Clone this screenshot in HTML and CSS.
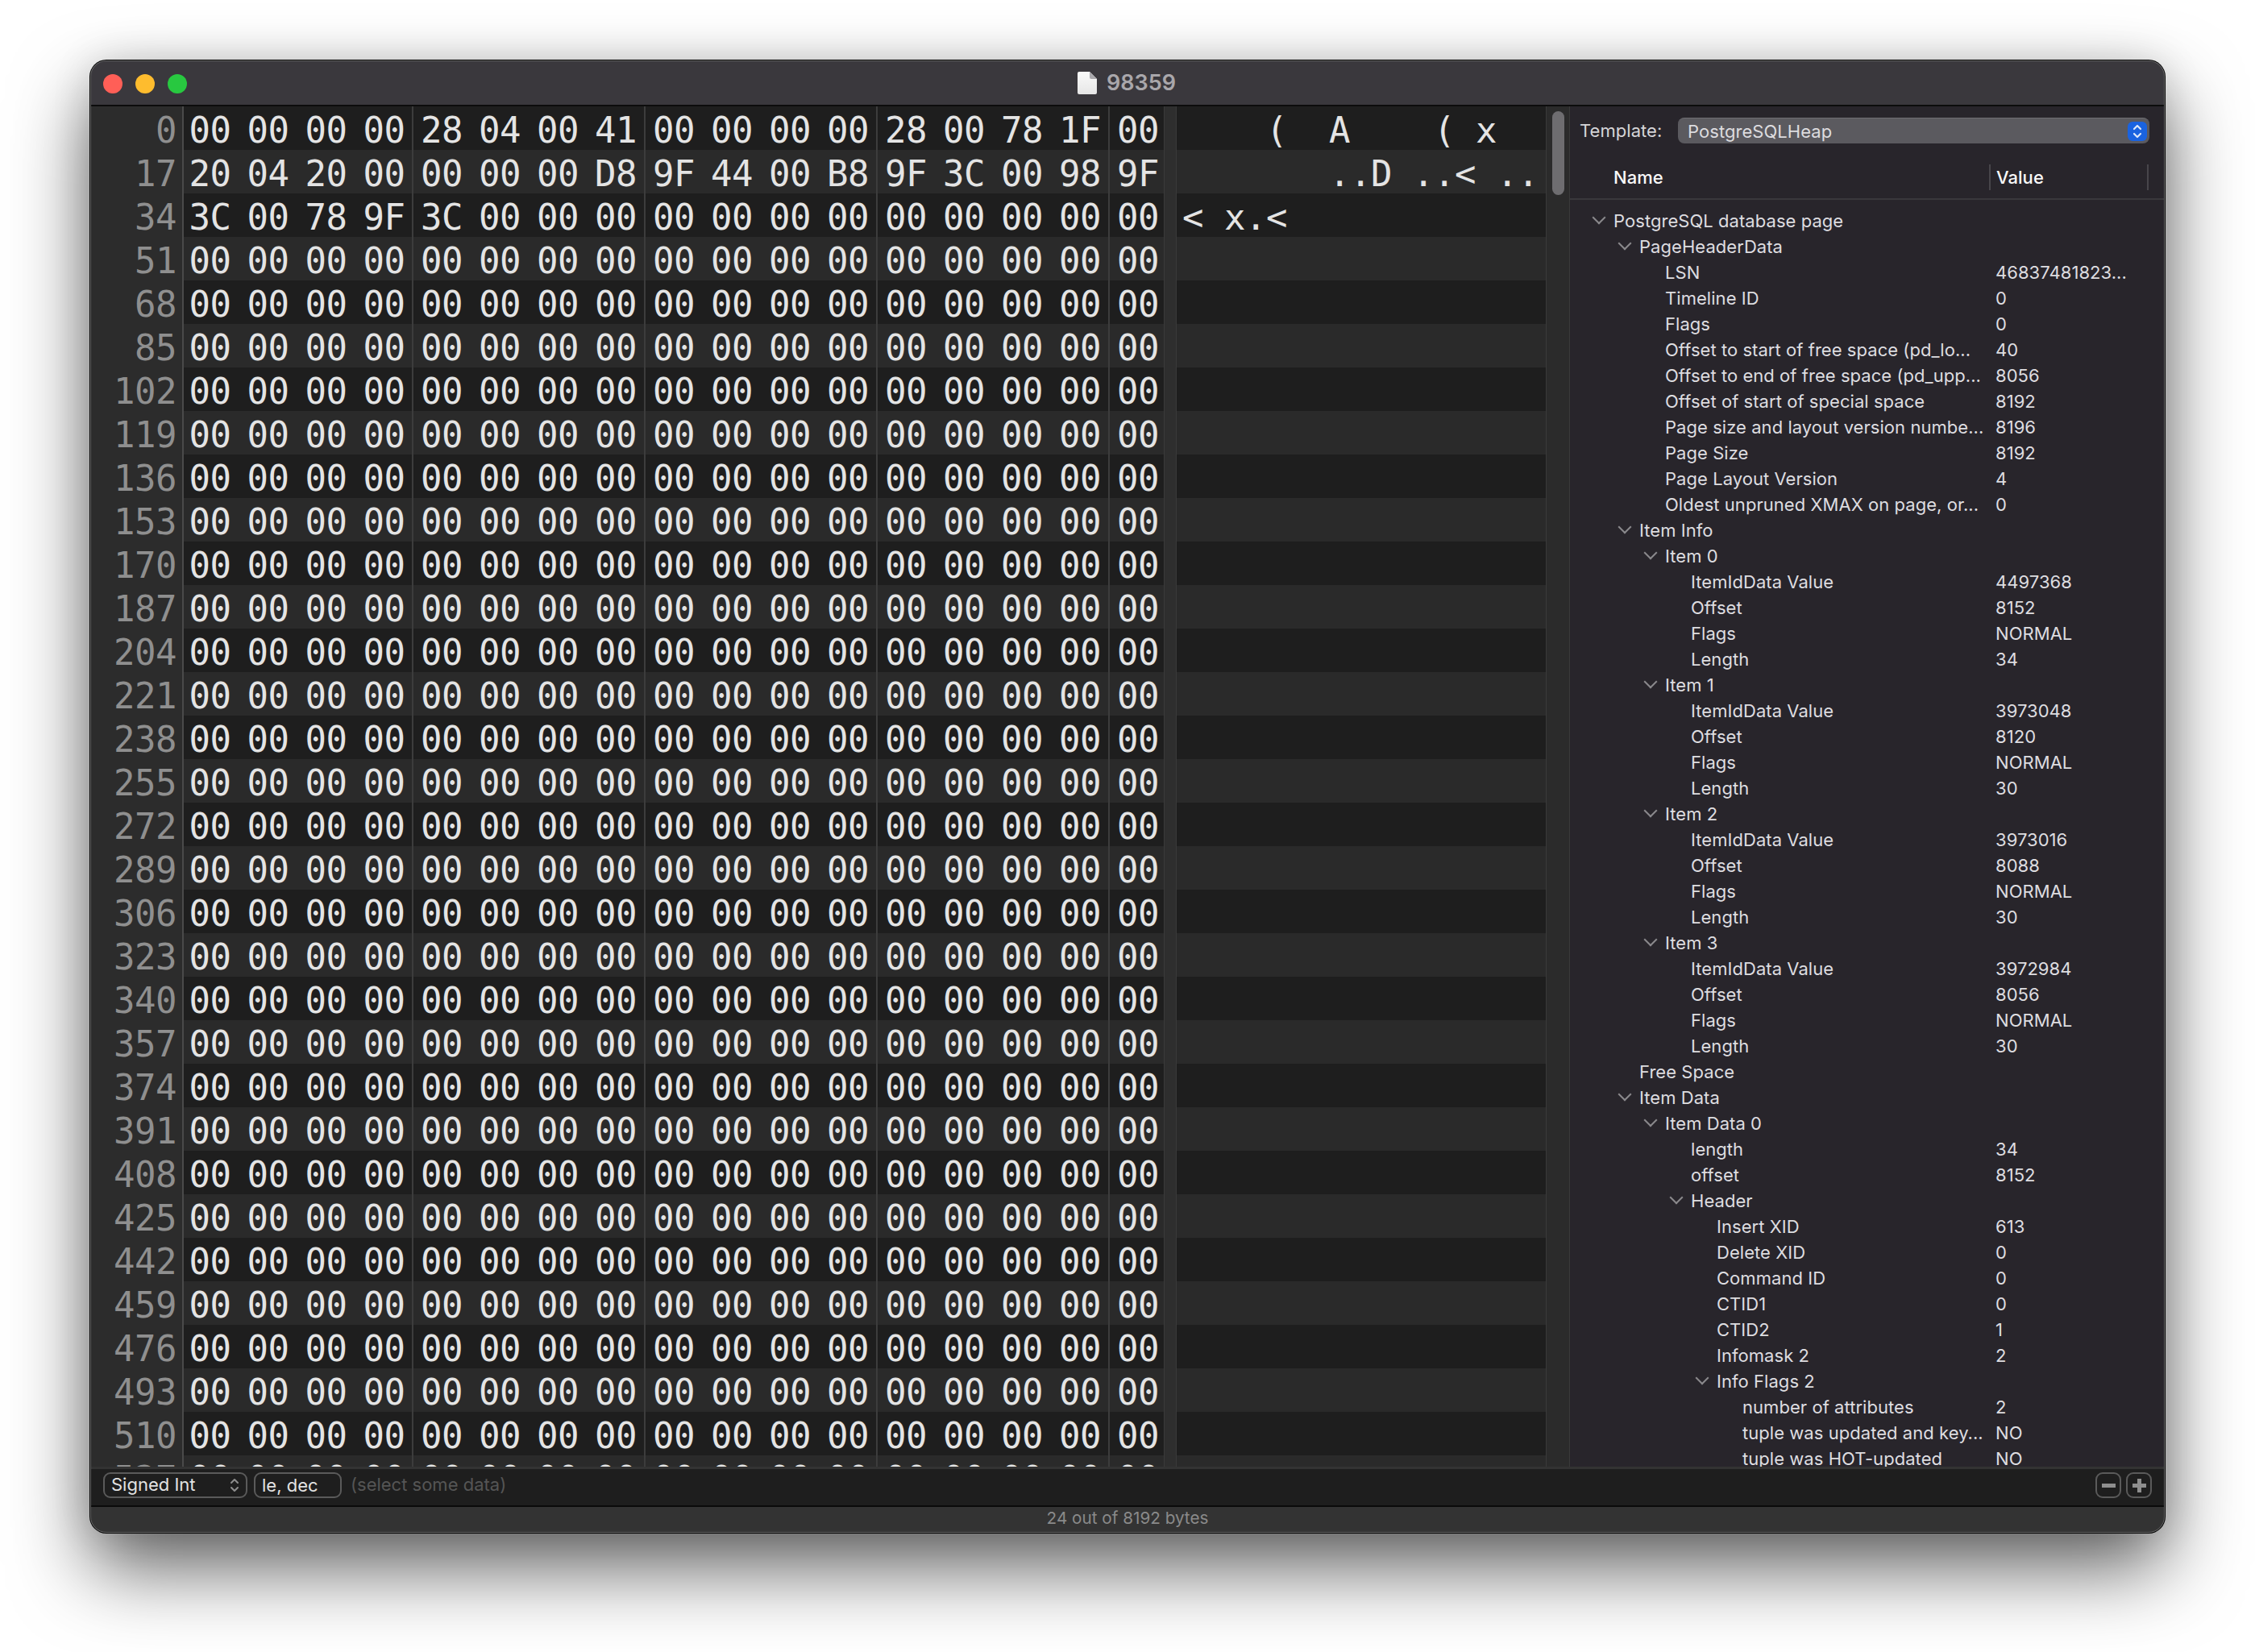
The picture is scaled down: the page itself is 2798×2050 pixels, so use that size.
FILE: index.html
```html
<!DOCTYPE html>
<html><head><meta charset="utf-8"><title>98359</title><link rel="stylesheet" href="styles.css"></head>
<body>
<div class="window">
<header class="titlebar">
<div class="lights"><i class="light red"></i><i class="light yellow"></i><i class="light green"></i></div>
<div class="title"><svg class="doc" width="24" height="28" viewBox="0 0 24 28"><defs><linearGradient id="dg" x1="0" y1="0" x2="0" y2="1"><stop offset="0" stop-color="#fafafa"/><stop offset="1" stop-color="#e6e6e6"/></linearGradient></defs><path d="M2 0H15L24 9V26a2 2 0 0 1-2 2H2a2 2 0 0 1-2-2V2a2 2 0 0 1 2-2Z" fill="url(#dg)"/><path d="M15 0V7a2 2 0 0 0 2 2H24Z" fill="#a9a8ac"/></svg><span>98359</span></div>
</header>
<main class="body">
<section class="hex">
<div class="row"><span class="off">0</span><span class="g">00 00 00 00</span><span class="g">28 04 00 41</span><span class="g">00 00 00 00</span><span class="g">28 00 78 1F</span><span class="g last">00</span><span class="sep"></span><span class="asc">    (  A    ( x</span></div>
<div class="row"><span class="off">17</span><span class="g">20 04 20 00</span><span class="g">00 00 00 D8</span><span class="g">9F 44 00 B8</span><span class="g">9F 3C 00 98</span><span class="g last">9F</span><span class="sep"></span><span class="asc">       ..D ..&lt; ..</span></div>
<div class="row"><span class="off">34</span><span class="g">3C 00 78 9F</span><span class="g">3C 00 00 00</span><span class="g">00 00 00 00</span><span class="g">00 00 00 00</span><span class="g last">00</span><span class="sep"></span><span class="asc">&lt; x.&lt;</span></div>
<div class="row"><span class="off">51</span><span class="g">00 00 00 00</span><span class="g">00 00 00 00</span><span class="g">00 00 00 00</span><span class="g">00 00 00 00</span><span class="g last">00</span><span class="sep"></span><span class="asc"></span></div>
<div class="row"><span class="off">68</span><span class="g">00 00 00 00</span><span class="g">00 00 00 00</span><span class="g">00 00 00 00</span><span class="g">00 00 00 00</span><span class="g last">00</span><span class="sep"></span><span class="asc"></span></div>
<div class="row"><span class="off">85</span><span class="g">00 00 00 00</span><span class="g">00 00 00 00</span><span class="g">00 00 00 00</span><span class="g">00 00 00 00</span><span class="g last">00</span><span class="sep"></span><span class="asc"></span></div>
<div class="row"><span class="off">102</span><span class="g">00 00 00 00</span><span class="g">00 00 00 00</span><span class="g">00 00 00 00</span><span class="g">00 00 00 00</span><span class="g last">00</span><span class="sep"></span><span class="asc"></span></div>
<div class="row"><span class="off">119</span><span class="g">00 00 00 00</span><span class="g">00 00 00 00</span><span class="g">00 00 00 00</span><span class="g">00 00 00 00</span><span class="g last">00</span><span class="sep"></span><span class="asc"></span></div>
<div class="row"><span class="off">136</span><span class="g">00 00 00 00</span><span class="g">00 00 00 00</span><span class="g">00 00 00 00</span><span class="g">00 00 00 00</span><span class="g last">00</span><span class="sep"></span><span class="asc"></span></div>
<div class="row"><span class="off">153</span><span class="g">00 00 00 00</span><span class="g">00 00 00 00</span><span class="g">00 00 00 00</span><span class="g">00 00 00 00</span><span class="g last">00</span><span class="sep"></span><span class="asc"></span></div>
<div class="row"><span class="off">170</span><span class="g">00 00 00 00</span><span class="g">00 00 00 00</span><span class="g">00 00 00 00</span><span class="g">00 00 00 00</span><span class="g last">00</span><span class="sep"></span><span class="asc"></span></div>
<div class="row"><span class="off">187</span><span class="g">00 00 00 00</span><span class="g">00 00 00 00</span><span class="g">00 00 00 00</span><span class="g">00 00 00 00</span><span class="g last">00</span><span class="sep"></span><span class="asc"></span></div>
<div class="row"><span class="off">204</span><span class="g">00 00 00 00</span><span class="g">00 00 00 00</span><span class="g">00 00 00 00</span><span class="g">00 00 00 00</span><span class="g last">00</span><span class="sep"></span><span class="asc"></span></div>
<div class="row"><span class="off">221</span><span class="g">00 00 00 00</span><span class="g">00 00 00 00</span><span class="g">00 00 00 00</span><span class="g">00 00 00 00</span><span class="g last">00</span><span class="sep"></span><span class="asc"></span></div>
<div class="row"><span class="off">238</span><span class="g">00 00 00 00</span><span class="g">00 00 00 00</span><span class="g">00 00 00 00</span><span class="g">00 00 00 00</span><span class="g last">00</span><span class="sep"></span><span class="asc"></span></div>
<div class="row"><span class="off">255</span><span class="g">00 00 00 00</span><span class="g">00 00 00 00</span><span class="g">00 00 00 00</span><span class="g">00 00 00 00</span><span class="g last">00</span><span class="sep"></span><span class="asc"></span></div>
<div class="row"><span class="off">272</span><span class="g">00 00 00 00</span><span class="g">00 00 00 00</span><span class="g">00 00 00 00</span><span class="g">00 00 00 00</span><span class="g last">00</span><span class="sep"></span><span class="asc"></span></div>
<div class="row"><span class="off">289</span><span class="g">00 00 00 00</span><span class="g">00 00 00 00</span><span class="g">00 00 00 00</span><span class="g">00 00 00 00</span><span class="g last">00</span><span class="sep"></span><span class="asc"></span></div>
<div class="row"><span class="off">306</span><span class="g">00 00 00 00</span><span class="g">00 00 00 00</span><span class="g">00 00 00 00</span><span class="g">00 00 00 00</span><span class="g last">00</span><span class="sep"></span><span class="asc"></span></div>
<div class="row"><span class="off">323</span><span class="g">00 00 00 00</span><span class="g">00 00 00 00</span><span class="g">00 00 00 00</span><span class="g">00 00 00 00</span><span class="g last">00</span><span class="sep"></span><span class="asc"></span></div>
<div class="row"><span class="off">340</span><span class="g">00 00 00 00</span><span class="g">00 00 00 00</span><span class="g">00 00 00 00</span><span class="g">00 00 00 00</span><span class="g last">00</span><span class="sep"></span><span class="asc"></span></div>
<div class="row"><span class="off">357</span><span class="g">00 00 00 00</span><span class="g">00 00 00 00</span><span class="g">00 00 00 00</span><span class="g">00 00 00 00</span><span class="g last">00</span><span class="sep"></span><span class="asc"></span></div>
<div class="row"><span class="off">374</span><span class="g">00 00 00 00</span><span class="g">00 00 00 00</span><span class="g">00 00 00 00</span><span class="g">00 00 00 00</span><span class="g last">00</span><span class="sep"></span><span class="asc"></span></div>
<div class="row"><span class="off">391</span><span class="g">00 00 00 00</span><span class="g">00 00 00 00</span><span class="g">00 00 00 00</span><span class="g">00 00 00 00</span><span class="g last">00</span><span class="sep"></span><span class="asc"></span></div>
<div class="row"><span class="off">408</span><span class="g">00 00 00 00</span><span class="g">00 00 00 00</span><span class="g">00 00 00 00</span><span class="g">00 00 00 00</span><span class="g last">00</span><span class="sep"></span><span class="asc"></span></div>
<div class="row"><span class="off">425</span><span class="g">00 00 00 00</span><span class="g">00 00 00 00</span><span class="g">00 00 00 00</span><span class="g">00 00 00 00</span><span class="g last">00</span><span class="sep"></span><span class="asc"></span></div>
<div class="row"><span class="off">442</span><span class="g">00 00 00 00</span><span class="g">00 00 00 00</span><span class="g">00 00 00 00</span><span class="g">00 00 00 00</span><span class="g last">00</span><span class="sep"></span><span class="asc"></span></div>
<div class="row"><span class="off">459</span><span class="g">00 00 00 00</span><span class="g">00 00 00 00</span><span class="g">00 00 00 00</span><span class="g">00 00 00 00</span><span class="g last">00</span><span class="sep"></span><span class="asc"></span></div>
<div class="row"><span class="off">476</span><span class="g">00 00 00 00</span><span class="g">00 00 00 00</span><span class="g">00 00 00 00</span><span class="g">00 00 00 00</span><span class="g last">00</span><span class="sep"></span><span class="asc"></span></div>
<div class="row"><span class="off">493</span><span class="g">00 00 00 00</span><span class="g">00 00 00 00</span><span class="g">00 00 00 00</span><span class="g">00 00 00 00</span><span class="g last">00</span><span class="sep"></span><span class="asc"></span></div>
<div class="row"><span class="off">510</span><span class="g">00 00 00 00</span><span class="g">00 00 00 00</span><span class="g">00 00 00 00</span><span class="g">00 00 00 00</span><span class="g last">00</span><span class="sep"></span><span class="asc"></span></div>
<div class="row"><span class="off">527</span><span class="g">00 00 00 00</span><span class="g">00 00 00 00</span><span class="g">00 00 00 00</span><span class="g">00 00 00 00</span><span class="g last">00</span><span class="sep"></span><span class="asc"></span></div>
</section>
<div class="scrollbar"><div class="thumb"></div></div>
<aside class="panel">
<div class="template"><span class="tlabel">Template:</span><div class="popup"><span>PostgreSQLHeap</span><span class="stepper"><svg width="12" height="18" viewBox="0 0 12 18" fill="none" stroke="#dfe9fb" stroke-width="2.2" stroke-linecap="round" stroke-linejoin="round"><path d="M2 6 6 2l4 4M2 12l4 4 4-4"/></svg></span></div></div>
<div class="thead"><span class="th name">Name</span><span class="th val">Value</span></div>
<div class="tree">
<div class="n l0 open"><span>PostgreSQL database page</span></div>
<div class="n l1 open"><span>PageHeaderData</span></div>
<div class="n l2"><span>LSN</span><b>46837481823...</b></div>
<div class="n l2"><span>Timeline ID</span><b>0</b></div>
<div class="n l2"><span>Flags</span><b>0</b></div>
<div class="n l2"><span>Offset to start of free space (pd_lo...</span><b>40</b></div>
<div class="n l2"><span>Offset to end of free space (pd_upp...</span><b>8056</b></div>
<div class="n l2"><span>Offset of start of special space</span><b>8192</b></div>
<div class="n l2"><span>Page size and layout version numbe...</span><b>8196</b></div>
<div class="n l2"><span>Page Size</span><b>8192</b></div>
<div class="n l2"><span>Page Layout Version</span><b>4</b></div>
<div class="n l2"><span>Oldest unpruned XMAX on page, or...</span><b>0</b></div>
<div class="n l1 open"><span>Item Info</span></div>
<div class="n l2 open"><span>Item 0</span></div>
<div class="n l3"><span>ItemIdData Value</span><b>4497368</b></div>
<div class="n l3"><span>Offset</span><b>8152</b></div>
<div class="n l3"><span>Flags</span><b>NORMAL</b></div>
<div class="n l3"><span>Length</span><b>34</b></div>
<div class="n l2 open"><span>Item 1</span></div>
<div class="n l3"><span>ItemIdData Value</span><b>3973048</b></div>
<div class="n l3"><span>Offset</span><b>8120</b></div>
<div class="n l3"><span>Flags</span><b>NORMAL</b></div>
<div class="n l3"><span>Length</span><b>30</b></div>
<div class="n l2 open"><span>Item 2</span></div>
<div class="n l3"><span>ItemIdData Value</span><b>3973016</b></div>
<div class="n l3"><span>Offset</span><b>8088</b></div>
<div class="n l3"><span>Flags</span><b>NORMAL</b></div>
<div class="n l3"><span>Length</span><b>30</b></div>
<div class="n l2 open"><span>Item 3</span></div>
<div class="n l3"><span>ItemIdData Value</span><b>3972984</b></div>
<div class="n l3"><span>Offset</span><b>8056</b></div>
<div class="n l3"><span>Flags</span><b>NORMAL</b></div>
<div class="n l3"><span>Length</span><b>30</b></div>
<div class="n l1"><span>Free Space</span></div>
<div class="n l1 open"><span>Item Data</span></div>
<div class="n l2 open"><span>Item Data 0</span></div>
<div class="n l3"><span>length</span><b>34</b></div>
<div class="n l3"><span>offset</span><b>8152</b></div>
<div class="n l3 open"><span>Header</span></div>
<div class="n l4"><span>Insert XID</span><b>613</b></div>
<div class="n l4"><span>Delete XID</span><b>0</b></div>
<div class="n l4"><span>Command ID</span><b>0</b></div>
<div class="n l4"><span>CTID1</span><b>0</b></div>
<div class="n l4"><span>CTID2</span><b>1</b></div>
<div class="n l4"><span>Infomask 2</span><b>2</b></div>
<div class="n l4 open"><span>Info Flags 2</span></div>
<div class="n l5"><span>number of attributes</span><b>2</b></div>
<div class="n l5"><span>tuple was updated and key...</span><b>NO</b></div>
<div class="n l5"><span>tuple was HOT-updated</span><b>NO</b></div>
</div>
</aside>
</main>
<div class="inspector">
<div class="ctl type"><span class="typetext">Signed Int</span><svg width="12" height="20" viewBox="0 0 12 20" fill="none" stroke="#8e8e8e" stroke-width="2" stroke-linecap="round" stroke-linejoin="round"><path d="M2 7l4-4 4 4M2 13l4 4 4-4"/></svg></div>
<div class="ctl fmt"><span>le, dec</span></div>
<span class="hint">(select some data)</span>
<div class="pm"><div class="ctl btn"><svg width="17" height="17" viewBox="0 0 17 17" fill="none" stroke="#8e8e8e" stroke-width="5"><path d="M0 8.5h17"/></svg></div><div class="ctl btn"><svg width="17" height="17" viewBox="0 0 17 17" fill="none" stroke="#8e8e8e" stroke-width="5"><path d="M0 8.5h17M8.5 0v17"/></svg></div></div>
</div>
<footer class="status">24 out of 8192 bytes</footer>
</div>
</body></html>
```
FILE: styles.css
```css
html,body{margin:0;padding:0;background:#fff}
body{width:2798px;height:2050px;overflow:hidden;padding:75px 0 0 112px;box-sizing:border-box}
.window{position:relative;width:2574px;height:1827px;border-radius:20px;display:flex;flex-direction:column;overflow:hidden;background:#2a2a2a;box-shadow:0 0 0 1px #000,0 44px 96px rgba(0,0,0,.62),0 0 50px rgba(0,0,0,.12)}
.window::after{content:"";position:absolute;inset:0;border:1px solid #666;border-radius:20px;pointer-events:none}
.titlebar{height:57px;flex:none;box-sizing:border-box;background:#3a383d;border-bottom:2px solid #0c0c0c;display:flex;align-items:center;justify-content:center;position:relative}
.lights{position:absolute;left:16px;top:17px;display:flex;gap:16px}
.light{display:block;width:24px;height:24px;border-radius:50%}
.red{background:#ff5f57}.yellow{background:#febc2e}.green{background:#28c840}
.title{display:flex;align-items:center;gap:12px;font:600 27px "Inter","Liberation Sans",sans-serif;color:#a9a7ab;margin-left:-2px}
.doc{display:block}
.body{height:1688px;flex:none;display:flex;overflow:hidden}
.hex{width:1806px;flex:none;overflow:hidden;font:44px/59px "DejaVu Sans Mono",monospace;letter-spacing:-.49px;color:#e4e4e4;border-left:1px solid #555;box-sizing:border-box}
.row{height:54px;display:flex;background:#1e1e1e}
.row:nth-child(even){background:#2a2a2a}
.off{width:115px;flex:none;box-sizing:border-box;text-align:right;padding-right:7px;background:#2c2c2c;color:#8f8f8f;border-right:2px solid #4a4a4a}
.g{white-space:pre;word-spacing:-6px;width:288px;flex:none;box-sizing:border-box;padding-left:9px;border-left:2px solid #3c3c3c}
.off + .g{width:283px;border-left:0;padding-left:6.5px}
.g.last{width:69px}
.sep{width:16px;flex:none;background:#2e2e2e;border-left:1px solid #3a3a3a;border-right:1px solid #3a3a3a;box-sizing:border-box}
.asc{white-space:pre;flex:1;padding-left:7px}
.scrollbar{width:30px;flex:none;background:#2b2b2b;border-left:1px solid #3a3a3a;border-right:1px solid #3a3a3a;box-sizing:border-box;padding:6px 7px}
.thumb{width:15px;height:104px;background:#6e6d70;border-radius:8px}
.panel{flex:1;min-width:0;background:#28252b;color:#dedde0;font:22px/32px "Inter","Liberation Sans",sans-serif;letter-spacing:.05px;overflow:hidden;display:flex;flex-direction:column;border-right:1px solid #666}
.template{height:60px;flex:none;display:flex;align-items:center;padding-left:12px;box-sizing:border-box}
.tlabel{color:#d6d5d8}
.popup{width:585px;height:32px;margin-left:auto;margin-right:18px;background:#5b5a5f;border-radius:8px;border-top:1px solid #6e6d72;display:flex;align-items:center;justify-content:space-between;box-sizing:border-box;padding:0 3px 0 12px;color:#dddcdf}
.stepper{width:24px;height:24px;background:#1a63e0;border-radius:6px;display:flex;align-items:center;justify-content:center}
.thead{height:56px;flex:none;border-bottom:2px solid #3a383c;box-sizing:border-box;display:flex;font-weight:500;color:#f8f8f8;padding-top:12px}
.th{display:block;height:32px;line-height:32px;box-sizing:border-box}
.name{width:522px;padding-left:54px;border-right:2px solid #47454a}
.val{width:196px;padding-left:7px;border-right:2px solid #47454a}
.tree{flex:1;min-height:0;overflow:hidden;padding-top:10px}
.n{height:32px;display:flex;position:relative;white-space:nowrap}
.n span{width:528px;flex:none;box-sizing:border-box}
.n b{font-weight:400}
.l0 span{padding-left:54px}
.l1 span{padding-left:86px}
.l2 span{padding-left:118px}
.l3 span{padding-left:150px}
.l4 span{padding-left:182px}
.l5 span{padding-left:214px}
.open::before{content:"";position:absolute;box-sizing:border-box;width:12px;height:12px;border:solid #8a898c;border-width:0 2px 2px 0;transform:rotate(45deg);top:6px}
.l0.open::before{left:30px}
.l1.open::before{left:62px}
.l2.open::before{left:94px}
.l3.open::before{left:126px}
.l4.open::before{left:158px}
.inspector{height:50px;flex:none;background:#1e1e1e;border-top:3px solid #333;border-bottom:2px solid #0a0a0a;box-sizing:border-box;display:flex;align-items:flex-start;padding:4px 0 0 16px;font:22px/30px "Inter","Liberation Sans",sans-serif;color:#e2e2e2;gap:8px}
.ctl{height:32px;border:2px solid #5a5a5a;border-radius:9px;box-sizing:border-box;display:flex;align-items:center}
.type{width:179px;justify-content:space-between;padding:0 8px}
.typetext{margin-bottom:3px}
.fmt{width:109px;padding-left:8px}
.hint{color:#555;margin-left:3px}
.pm{margin-left:auto;margin-right:16px;display:flex;gap:6px}
.btn{width:32px;justify-content:center}
.status{height:32px;flex:none;background:#333;text-align:center;font:20.7px/28px "Inter","Liberation Sans",sans-serif;color:#8a8a8a}
```
